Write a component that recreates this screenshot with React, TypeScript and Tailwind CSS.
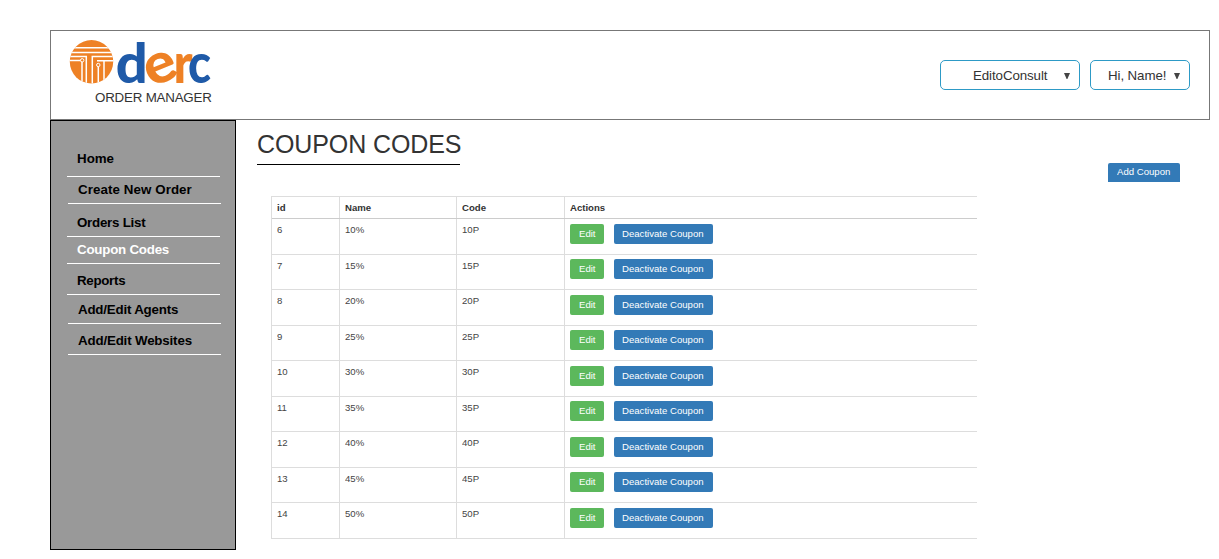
type MenuItem = { label: string; row: string; active?: boolean };

const menu: MenuItem[] = [
  { label: "Home", row: "h-[56px] ml-4 pb-[9px] pl-[10px] tracking-[0px]" },
  { label: "Create New Order", row: "h-[27px] ml-[17px] pb-[5px] pl-[10px] tracking-[0.08px]" },
  { label: "Orders List", row: "h-[33px] ml-4 pb-[5px] pl-[10px] tracking-[-0.25px]" },
  { label: "Coupon Codes", row: "h-[27px] ml-4 pb-[5px] pl-[10px] tracking-[-0.23px]", active: true },
  { label: "Reports", row: "h-[31px] ml-4 pb-[5px] pl-[10px] tracking-[-0.3px]" },
  { label: "Add/Edit Agents", row: "h-[29px] ml-[17px] pb-[5px] pl-[10px] tracking-[-0.2px]" },
  { label: "Add/Edit Websites", row: "h-[31px] ml-[17px] pb-[5px] pl-[10px] tracking-[-0.17px]" },
];

const coupons = [
  { id: 6, value: 10 },
  { id: 7, value: 15 },
  { id: 8, value: 20 },
  { id: 9, value: 25 },
  { id: 10, value: 30 },
  { id: 11, value: 35 },
  { id: 12, value: 40 },
  { id: 13, value: 45 },
  { id: 14, value: 50 },
];

function Wide({ children }: { children: React.ReactNode }) {
  return <span className="inline-block origin-left scale-x-[1.09] whitespace-nowrap">{children}</span>;
}

function Logo() {
  return (
    <svg width="144" height="50" viewBox="68 38 144 50" className="block overflow-visible">
      <defs>
        <clipPath id="disc">
          <circle cx="91.5" cy="61.8" r="21.7" />
        </clipPath>
      </defs>
      <g clipPath="url(#disc)">
        <rect x="68" y="38" width="46" height="50" fill="#ee8125" />
        <g fill="none" stroke="#fff" strokeWidth="1.5">
          <path d="M68 47.8H115" />
          <path d="M68 52.4H115" />
          <path d="M68 56.6H86.3V85" />
          <path d="M68 60.4H81" />
          <path d="M82 61V85" />
          <path d="M115 56.6H92.3V85" />
          <path d="M115 60.8H97" />
          <path d="M98.3 66V85" />
          <path d="M104 61V85" />
        </g>
        <g fill="#ee8125" stroke="#fff" strokeWidth="1">
          <circle cx="82.2" cy="60.3" r="1.7" />
          <circle cx="98.3" cy="65" r="1.7" />
        </g>
      </g>
      <g fontFamily="Lato, sans-serif" fontWeight="900" fontSize="56">
        <text x="115.8" y="82.5" fill="#1f5aa8" textLength="32" lengthAdjust="spacingAndGlyphs">d</text>
        <text x="144.5" y="82.3" fill="#ee8125" textLength="32" lengthAdjust="spacingAndGlyphs" transform="rotate(-22 161 68)">e</text>
        <text x="173.5" y="82.5" fill="#ee8125" textLength="19" lengthAdjust="spacingAndGlyphs">r</text>
        <text x="188" y="82.5" fill="#1f5aa8" textLength="23" lengthAdjust="spacingAndGlyphs">c</text>
      </g>
    </svg>
  );
}

function Arrow() {
  return (
    <svg width="6" height="6" viewBox="0 0 6 6" className="mt-px shrink-0">
      <path d="M0 0H6L3.4 6H2.6Z" fill="#444" />
    </svg>
  );
}

function Header() {
  return (
    <header className="flex h-[90px] w-[1160px] justify-between border border-[#777]">
      <div className="flex w-[162px] flex-col pt-[7px] pl-[17px]">
        <Logo />
        <div className="mt-0.5 pl-[27px] text-[13.333px] leading-4 tracking-[-0.2px] whitespace-nowrap text-[#333]">
          ORDER MANAGER
        </div>
      </div>
      <div className="flex gap-[10px] pt-[29px] pr-[19px] text-[13.333px] text-[#333]">
        <button className="flex h-[30px] w-[140px] items-center justify-between rounded-[5px] border border-[#2d9ac6] pr-[9px] pl-8">
          <span className="pt-0.5 tracking-[-0.1px]">EditoConsult</span>
          <Arrow />
        </button>
        <button className="flex h-[30px] w-[100px] items-center justify-between rounded-[5px] border border-[#2d9ac6] pr-[9px] pl-[17px]">
          <span className="pt-0.5 tracking-[-0.1px]">Hi, Name!</span>
          <Arrow />
        </button>
      </div>
    </header>
  );
}

function Sidebar() {
  return (
    <nav className="h-[430px] w-[186px] shrink-0 border border-black bg-[#999]">
      {menu.map((m) => (
        <div
          key={m.label}
          className={`flex w-[153px] items-end border-b border-white text-[13.333px] leading-4 font-bold whitespace-nowrap ${m.row} ${m.active ? "text-white" : "text-black"}`}
        >
          {m.label}
        </div>
      ))}
    </nav>
  );
}

function CouponTable() {
  return (
    <div className="mt-[31px] ml-[14px] w-[706px] border-t border-l border-[#ddd] text-[8.8px] leading-3 text-[#444]">
      <div className="grid h-[22px] grid-cols-[68px_117px_108px_1fr] border-b border-[#ccc] font-bold text-[#333]">
        {["id", "Name", "Code", "Actions"].map((h) => (
          <div key={h} className="border-r border-[#ddd] pt-[5px] pl-[5px] last:border-r-0">
            <Wide>{h}</Wide>
          </div>
        ))}
      </div>
      {coupons.map((c) => (
        <div key={c.id} className="grid h-[35.56px] grid-cols-[68px_117px_108px_1fr] border-b border-[#ddd]">
          <div className="border-r border-[#ddd] pt-[5px] pl-[5px]">
            <Wide>{c.id}</Wide>
          </div>
          <div className="border-r border-[#ddd] pt-[5px] pl-[5px]">
            <Wide>{c.value}%</Wide>
          </div>
          <div className="border-r border-[#ddd] pt-[5px] pl-[5px]">
            <Wide>{c.value}P</Wide>
          </div>
          <div className="flex gap-[10px] pt-[4.6px] pl-[5px] text-white">
            <button className="flex h-5 w-[34px] items-center rounded-[2px] bg-[#5cb85c] pl-[9px]">
              <Wide>Edit</Wide>
            </button>
            <button className="flex h-5 w-[99px] items-center rounded-[2px] bg-[#337ab7] pl-[8px]">
              <Wide>Deactivate Coupon</Wide>
            </button>
          </div>
        </div>
      ))}
    </div>
  );
}

export default function App() {
  return (
    <div className="h-[559px] w-[1219px] overflow-hidden bg-white pt-[30px] pl-[50px] font-['Liberation_Sans',Arial,sans-serif]">
      <Header />
      <div className="flex">
        <Sidebar />
        <main className="flex w-[944px] justify-between pl-[21px]">
          <div>
            <h1 className="h-[45px] w-[203px] border-b border-black pt-[9px] text-[25px] leading-[30px] tracking-[-0.1px] whitespace-nowrap text-[#333]">
              COUPON CODES
            </h1>
            <CouponTable />
          </div>
          <button className="mt-[43px] flex h-[19px] w-[72px] items-center rounded-t-[2px] bg-[#337ab7] pt-px pl-[9px] text-[8.8px] text-white">
            <Wide>Add Coupon</Wide>
          </button>
        </main>
      </div>
    </div>
  );
}
